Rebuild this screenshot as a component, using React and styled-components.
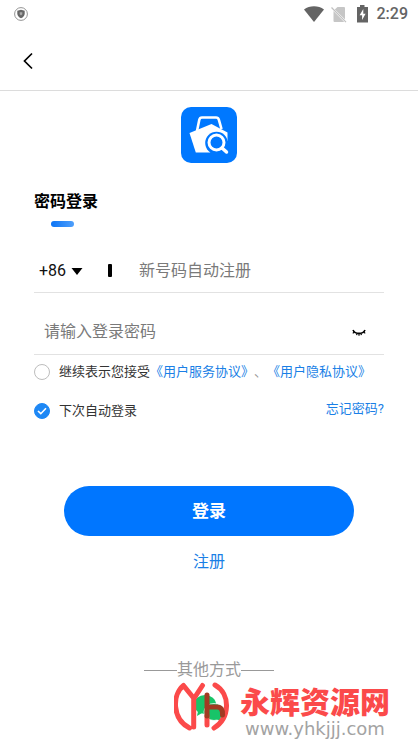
import React, { useState } from 'react';
import styled, { createGlobalStyle } from 'styled-components';

const GlobalStyle = createGlobalStyle`
  * {
    box-sizing: border-box;
  }
  body {
    margin: 0;
    background: #fff;
    color: #111;
    font-family: Roboto, "Noto Sans CJK SC", sans-serif;
    text-spacing-trim: space-all;
  }
  button, input, select {
    font-family: inherit;
  }
`;

const Page = styled.div`
  display: flex;
  flex-direction: column;
  min-height: 100vh;
`;

const StatusBar = styled.div`
  display: flex;
  align-items: center;
  justify-content: space-between;
  height: 28px;
  padding: 0 10px 0 14px;
  color: #646464;
`;

const StatusIcons = styled.div`
  display: flex;
  align-items: center;
  gap: 7px;
`;

const Clock = styled.span`
  font-size: 16px;
  line-height: 20px;
  font-weight: 500;
`;

const Header = styled.header`
  display: flex;
  align-items: center;
  height: 63px;
  padding: 4px 20px 0;
  border-bottom: 1px solid #dcdcdc;
`;

const BackButton = styled.button`
  display: flex;
  padding: 0;
  border: 0;
  background: none;
  color: #000;
`;

const Logo = styled.svg`
  align-self: center;
  margin-top: 16px;
`;

const Form = styled.form`
  display: flex;
  flex-direction: column;
  padding: 0 34px;
`;

const Title = styled.h1`
  margin: 27px 0 0;
  font-size: 16px;
  line-height: 24px;
  font-weight: 700;
  color: #000;
  &::after {
    content: "";
    display: block;
    width: 23px;
    height: 6px;
    margin: 7px 0 0 17px;
    border-radius: 3px;
    background: linear-gradient(90deg, #0b74f5, #4f9ffb);
  }
`;

const Field = styled.div`
  display: flex;
  align-items: center;
  height: 46px;
  margin-top: ${props => props.$top};
  padding: ${props => props.$pad};
  border-bottom: 1px solid #e2e2e2;
`;

const AreaCode = styled.div`
  display: flex;
  align-items: center;
  gap: 4px;
`;

const AreaSelect = styled.select`
  appearance: none;
  padding: 0;
  border: 0;
  background: none;
  color: #111;
  font-size: 16px;
  line-height: 24px;
`;

const Divider = styled.span`
  width: 4px;
  height: 13px;
  margin: 0 27px 0 25px;
  border-radius: 1px;
  background: #000;
`;

const TextInput = styled.input`
  flex: 1;
  min-width: 0;
  padding: 0;
  border: 0;
  outline: 0;
  background: none;
  font-size: 16px;
  line-height: 24px;
  &::placeholder {
    color: #7a7a7a;
  }
`;

const IconButton = styled.button`
  display: flex;
  padding: 0;
  border: 0;
  background: none;
`;

const OptionRow = styled.div`
  display: flex;
  justify-content: space-between;
  align-items: flex-start;
  margin-top: ${props => props.$top};
  font-size: 13px;
  white-space: nowrap;
`;

const Option = styled.label`
  display: flex;
  align-items: center;
  gap: 9px;
  line-height: 22px;
  color: #333;
`;

const Tick = styled.span`
  display: grid;
  place-items: center;
  width: 16px;
  height: 16px;
  > * {
    grid-area: 1 / 1;
  }
`;

const TickBox = styled.input`
  appearance: none;
  width: 16px;
  height: 16px;
  margin: 0;
  border: 1px solid #bdbdbd;
  border-radius: 50%;
  &:checked {
    border-color: #1e88f5;
    background: #1e88f5;
  }
`;

const TickMark = styled.svg`
  z-index: 1;
  pointer-events: none;
`;

const Link = styled.a`
  color: #1a7fe6;
  text-decoration: none;
`;

const ForgotLink = styled(Link)`
  line-height: 18px;
`;

const Comma = styled.span`
  color: #999;
`;

const LoginButton = styled.button`
  height: 50px;
  margin: 64px 30px 0;
  padding: 0 0 4px;
  border: 0;
  border-radius: 25px;
  background: #0076ff;
  color: #fff;
  font-size: 17px;
  font-weight: 700;
`;

const RegisterLink = styled(Link)`
  align-self: center;
  margin-top: 14px;
  font-size: 16px;
  line-height: 24px;
`;

const Footer = styled.footer`
  position: relative;
  display: flex;
  flex-direction: column;
  align-items: center;
  margin-top: 84px;
`;

const OtherWays = styled.p`
  display: flex;
  align-items: center;
  margin: 0;
  font-size: 16px;
  line-height: 24px;
  color: #999;
  &::before,
  &::after {
    content: "";
    width: 33px;
    height: 1px;
    background: #999;
  }
`;

const WechatButton = styled(IconButton)`
  margin-top: 12px;
`;

const Watermark = styled.div`
  position: absolute;
  right: 28px;
  bottom: -16px;
  display: flex;
  align-items: flex-start;
  gap: 10px;
  pointer-events: none;
`;

const SiteName = styled.div`
  padding-top: 4px;
  font-size: 30px;
  line-height: 34px;
  font-weight: 900;
  color: #fb4a4a;
`;

const SiteUrl = styled.div`
  padding-left: 5px;
  font-family: "DejaVu Sans", sans-serif;
  font-size: 18px;
  line-height: 18px;
  color: #a3a3a3;
`;

function CheckField({ id, label, children, checked }) {
  const [on, setOn] = useState(checked);
  return (
    <Option htmlFor={id}>
      <Tick>
        <TickBox
          id={id}
          type="checkbox"
          aria-label={label}
          checked={on}
          onChange={e => setOn(e.target.checked)}
        />
        {on && (
          <TickMark width="10" height="8" viewBox="0 0 10 8" fill="none">
            <path d="M1 4l2.8 2.7L9 1.2" stroke="#fff" strokeWidth="1.6" />
          </TickMark>
        )}
      </Tick>
      <span>{children}</span>
    </Option>
  );
}

function App() {
  const [visible, setVisible] = useState(false);

  return (
    <Page>
      <GlobalStyle />
      <StatusBar>
        <svg width="14" height="14" viewBox="0 0 14 14">
          <circle cx="7" cy="7" r="6.4" fill="#fff" stroke="#888" strokeWidth=".9" />
          <path d="M7 2.8l3.7 1v2.7c0 2.2-1.4 3.8-3.7 4.8-2.3-1-3.7-2.6-3.7-4.8V3.8z" fill="#666" />
          <path d="M5.7 5.2h2.6v2L7 8.6 5.7 7.2z" fill="#aaa" />
        </svg>
        <StatusIcons>
          <svg width="20" height="17" viewBox="0 0 20 17">
            <path d="M0 3.5C5.6-.9 14.4-.9 20 3.5L10 16z" fill="#646464" />
          </svg>
          <svg width="16" height="17" viewBox="0 0 16 17">
            <path d="M6.5 1H13a1 1 0 0 1 1 1V13.6L3.8 3.4zM2.5 5l10.8 11H3.5a1 1 0 0 1-1-1z" fill="#c6c6c6" />
            <path d="M.5 1.5L15 16.2" stroke="#c0c0c0" strokeWidth="1.2" />
          </svg>
          <svg width="16" height="18" viewBox="0 0 16 18">
            <path d="M6 0h4.5v2H14v15.5H3V2h3z" fill="#646464" />
            <path d="M9.3 4L5.6 10.3h2.5V15l3.5-6.3H9.3z" fill="#fff" />
          </svg>
          <Clock>2:29</Clock>
        </StatusIcons>
      </StatusBar>

      <Header>
        <BackButton type="button" aria-label="返回">
          <svg width="16" height="18" viewBox="0 0 16 18" fill="none">
            <path d="M12 1.5L4.5 9l7.5 7.5" stroke="#000" strokeWidth="1.7" />
          </svg>
        </BackButton>
      </Header>

      <Logo width="56" height="56" viewBox="0 0 56 56">
        <rect width="56" height="56" rx="10" fill="#0078ff" />
        <path
          d="M16 24L18.3 12.8Q18.8 10.5 21 10.5H35Q37.2 10.5 37.9 12.8L40.5 22"
          fill="none"
          stroke="#fff"
          strokeWidth="2.6"
        />
        <path d="M8.5 26L30.5 17 46.5 25.5V45.5H14.8z" fill="#fff" />
        <circle cx="35.5" cy="36" r="11.3" fill="#0078ff" />
        <path d="M35.5 34H48V48H28z" fill="#0078ff" />
        <circle cx="35.5" cy="35.5" r="7.5" fill="none" stroke="#fff" strokeWidth="3" />
        <path d="M41 41l4.5 4" stroke="#fff" strokeWidth="3.4" strokeLinecap="round" />
      </Logo>

      <Form onSubmit={e => e.preventDefault()}>
        <Title>密码登录</Title>

        <Field $top="20px" $pad="2px 0 0 5px">
          <AreaCode>
            <AreaSelect aria-label="区号" defaultValue="86">
              <option value="86">+86</option>
            </AreaSelect>
            <svg width="12" height="8" viewBox="0 0 12 8">
              <path d="M.5 1h11L6 8z" fill="#000" />
            </svg>
          </AreaCode>
          <Divider />
          <TextInput type="tel" aria-label="手机号" placeholder="新号码自动注册" />
        </Field>

        <Field $top="16px" $pad="0 18px 0 10px">
          <TextInput
            type={visible ? 'text' : 'password'}
            aria-label="密码"
            placeholder="请输入登录密码"
          />
          <IconButton type="button" aria-label="显示密码" onClick={() => setVisible(!visible)}>
            <svg width="14" height="8" viewBox="0 0 14 8" fill="none" stroke="#000">
              <path d="M1 2C3 6.5 11 6.5 13 2" strokeWidth="1.6" />
              <path d="M2.3 3.8L.8 5.3M5.2 5.2L4.6 7.1M7 5.5v2.2M8.8 5.2l.6 1.9M11.7 3.8l1.5 1.5" strokeWidth="1.2" />
            </svg>
          </IconButton>
        </Field>

        <OptionRow $top="6px">
          <CheckField id="agree" label="继续表示您接受" checked={false}>
            继续表示您接受
            <Link href="#terms">《用户服务协议》</Link>
            <Comma>、</Comma>
            <Link href="#privacy">《用户隐私协议》</Link>
          </CheckField>
        </OptionRow>

        <OptionRow $top="17px">
          <CheckField id="remember" label="下次自动登录" checked>
            下次自动登录
          </CheckField>
          <ForgotLink href="#forgot">忘记密码?</ForgotLink>
        </OptionRow>

        <LoginButton type="submit">登录</LoginButton>
        <RegisterLink href="#register">注册</RegisterLink>
      </Form>

      <Footer>
        <OtherWays>其他方式</OtherWays>
        <WechatButton type="button" aria-label="微信登录">
          <svg width="30" height="28" viewBox="0 0 30 28" fill="#18c468">
            <ellipse cx="11" cy="10.5" rx="11" ry="9.5" />
            <path d="M4 17l-1 5 5-3z" />
            <ellipse cx="20" cy="18" rx="10" ry="8.5" stroke="#fff" strokeWidth=".8" />
            <path d="M22 25l5 2-1-4z" />
          </svg>
        </WechatButton>
        <Watermark>
          <svg width="56" height="50" viewBox="0 0 56 50" fill="none" stroke="#fb4a4a" strokeWidth="5" strokeLinecap="round" strokeLinejoin="round">
            <path d="M15.5 46C-2 37-2 13 9.5 3.5L20 16.5 28.5 3.5M19.7 16.5V45" />
            <path d="M41 3C57 12 56 36 40 46" />
            <path d="M33 34V43" />
            <path d="M33 13V34M33 25H43Q49 25 48.5 33" stroke="#a23a22" />
          </svg>
          <div>
            <SiteName>永辉资源网</SiteName>
            <SiteUrl>www.yhkjjj.com</SiteUrl>
          </div>
        </Watermark>
      </Footer>
    </Page>
  );
}

export default App;
